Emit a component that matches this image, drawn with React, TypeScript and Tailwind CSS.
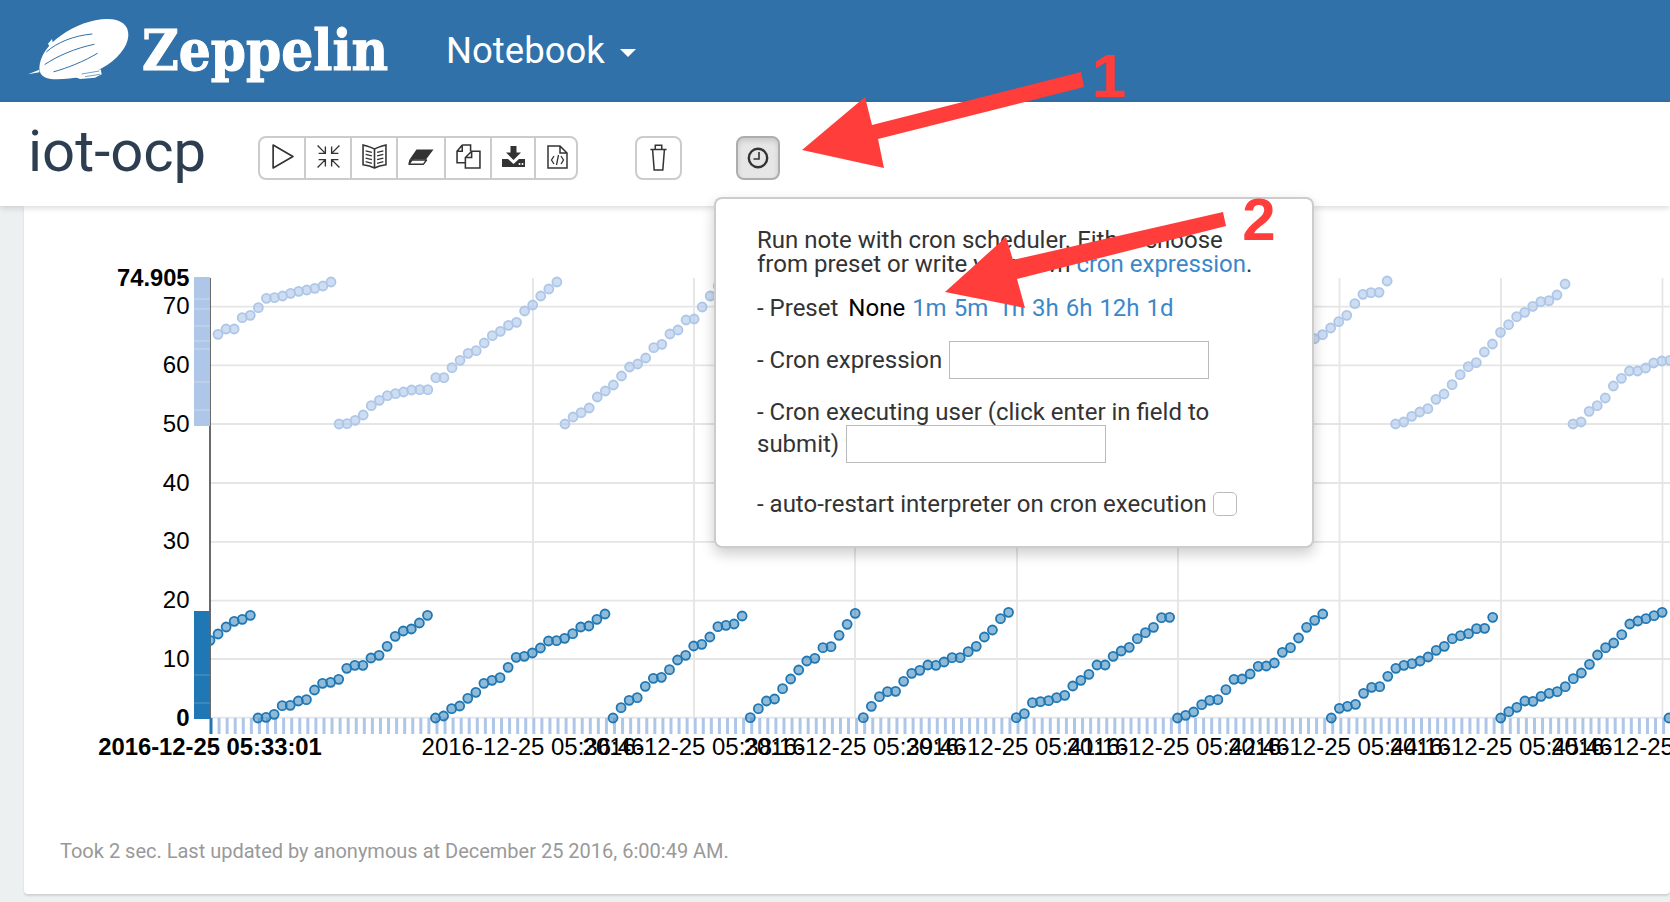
const darkCycles = [
  { x: 210, y: [181, 162, 141, 124, 118, 106] },
  { x: 258, y: [414, 412, 403, 377, 376, 363, 359, 330, 310, 307, 298, 265, 256, 256, 234, 226, 199, 169, 153, 147, 129, 106] },
  { x: 435.5, y: [414, 408, 386, 378, 355, 337, 310, 301, 293, 262, 232, 229, 219, 204, 183, 182, 175, 161, 141, 138, 118, 102] },
  { x: 613, y: [414, 383, 361, 353, 319, 295, 292, 269, 240, 226, 198, 193, 171, 140, 136, 132, 108] },
  { x: 750.3, y: [413, 386, 363, 357, 326, 297, 270, 243, 235, 203, 200, 166, 133, 100] },
  { x: 863.3, y: [413, 379, 350, 335, 334, 304, 280, 271, 255, 256, 246, 233, 233, 215, 199, 171, 150, 116, 97] },
  { x: 1016.3, y: [413, 401, 368, 365, 362, 353, 346, 318, 301, 283, 255, 255, 229, 213, 202, 176, 158, 142, 113, 112] },
  { x: 1177.5, y: [414, 406, 396, 374, 361, 359, 329, 298, 297, 282, 259, 258, 249, 217, 203, 174, 142, 121, 102] },
  { x: 1331.3, y: [414, 385, 379, 373, 340, 322, 320, 289, 265, 256, 251, 243, 231, 211, 199, 176, 167, 161, 146, 145, 112] },
  { x: 1500.7, y: [414, 395, 382, 363, 364, 349, 340, 335, 320, 296, 279, 253, 225, 203, 189, 164, 132, 123, 116, 107, 97] },
  { x: 1669, y: [414] },
]

const lightCycles = [
  { x: 218, y: [253, 237, 237, 203, 196, 173, 145, 143, 138, 130, 124, 120, 115, 108, 96] },
  { x: 339, y: [522, 521, 511, 495, 467, 451, 437, 431, 426, 420, 419, 419, 383, 383, 353, 331, 310, 302, 279, 257, 244, 226, 217, 183, 165, 138, 117, 96] },
  { x: 565, y: [522, 501, 488, 474, 441, 423, 405, 378, 351, 342, 324, 293, 283, 252, 240, 210, 207, 171, 138, 108] },
  { x: 1314.5, y: [266, 254, 234, 215, 196, 161, 133, 128, 127, 93] },
  { x: 1395.6, y: [522, 516, 499, 486, 476, 448, 432, 404, 374, 350, 338, 306, 282, 247, 224, 200, 187, 169, 155, 152, 135, 102] },
  { x: 1573, y: [522, 516, 484, 467, 444, 408, 385, 363, 363, 354, 339, 333, 331] },
]

const gridY = [306.7, 365.4, 424, 483, 541.8, 600.7, 659, 717.7]
const gridX = [533, 694, 855, 1017, 1178, 1339.5, 1501, 1662.5]
const yLabels = [70, 60, 50, 40, 30, 20, 10]
const xLabels = ['05:36:46', '05:38:16', '05:39:46', '05:41:16', '05:42:46', '05:44:16', '05:45:46', '05:47:16']
const ticks = Array.from({ length: 182 }, (_, i) => 210 + i * 8.07)

function Chart() {
  return (
    <svg viewBox="24 206 1646 620" className="block h-[620px] w-[1646px]" fontFamily="'Liberation Sans', Arial, sans-serif">
      {gridY.map((y) => (
        <line key={y} x1={210} x2={1670} y1={y} y2={y} stroke="#e5e5e5" strokeWidth={1.8} />
      ))}
      {gridX.map((x) => (
        <line key={x} x1={x} x2={x} y1={278} y2={718} stroke="#e5e5e5" strokeWidth={1.8} />
      ))}
      <line x1={210} x2={210} y1={278} y2={718} stroke="#444" strokeWidth={1.6} />

      <rect x={194} y={277} width={16} height={149} fill="#aec7e8" />
      {[299, 309, 326, 341, 349, 382, 410].map((y) => (
        <line key={y} x1={194} x2={210} y1={y} y2={y} stroke="#fff" strokeOpacity={0.35} />
      ))}
      <rect x={194} y={611} width={16} height={108} fill="#1f77b4" />
      {[675, 703].map((y) => (
        <line key={y} x1={194} x2={210} y1={y} y2={y} stroke="#fff" strokeOpacity={0.25} />
      ))}

      {ticks.map((x, i) => (
        <rect key={x} x={x - 0.5} y={718} width={3} height={16} fill={i === 0 ? '#1f77b4' : '#aec7e8'} />
      ))}

      {lightCycles.map((c) =>
        c.y.map((y, i) => (
          <circle key={`${c.x}-${i}`} cx={c.x + i * 8.07} cy={250 + y / 3} r={4.5} fill="#aec7e8" fillOpacity={0.6} stroke="#aec7e8" strokeWidth={1.8} />
        )),
      )}
      {darkCycles.map((c) =>
        c.y.map((y, i) => (
          <circle key={`${c.x}-${i}`} cx={c.x + i * 8.07} cy={580 + y / 3} r={4.5} fill="#1f77b4" fillOpacity={0.5} stroke="#1f77b4" strokeWidth={1.8} />
        )),
      )}

      {yLabels.map((v, i) => (
        <text key={v} x={189.5} y={gridY[i] + 7.5} textAnchor="end" fontSize={24} fill="#000">
          {v}
        </text>
      ))}
      <text x={189.5} y={286} textAnchor="end" fontSize={23.7} fontWeight="bold" fill="#000">
        74.905
      </text>
      <text x={189.5} y={725.7} textAnchor="end" fontSize={24} fontWeight="bold" fill="#000">
        0
      </text>

      {xLabels.map((t, i) => (
        <text key={t} x={gridX[i]} y={755} textAnchor="middle" fontSize={24} fill="#000">
          2016-12-25 {t}
        </text>
      ))}
      <text x={210} y={755} textAnchor="middle" fontSize={23.8} fontWeight="bold" fill="#000">
        2016-12-25 05:33:01
      </text>
    </svg>
  )
}

function Logo() {
  return (
    <svg viewBox="0 0 390 225" className="-mt-[6px] h-[75px] w-[130px] shrink-0">
      <path
        d="M58 170 C60 135 82 102 122 74 C165 44 215 24 262 24 C302 24 327 42 325 74 C323 108 292 146 245 172 C205 194 165 205 110 205 C78 205 58 196 58 170 Z"
        fill="#fff"
      />
      <path d="M24 190 L58 176 L58 184 Z M84 98 L96 84 L99 98 L88 106 Z" fill="#fff" />
      <path d="M165 198 L200 182 L242 175 L245 190 L225 200 L180 204 Z" fill="#fff" />
      <path d="M185 189 L238 180 M195 197 L240 190" stroke="#3071a9" strokeWidth={2} fill="none" />
      <g stroke="#3071a9" strokeWidth={3} fill="none" strokeLinecap="round">
        <path d="M80 122 C110 95 160 74 216 69" />
        <path d="M75 160 C112 135 165 112 222 100" />
        <path d="M102 182 C140 172 195 150 232 127" />
      </g>
    </svg>
  )
}

function ToolIcon({ children, w = 25, h = 25 }: { children: React.ReactNode; w?: number; h?: number }) {
  return (
    <svg viewBox="0 0 24 24" width={w} height={h} fill="none" stroke="#333" strokeWidth={1.5}>
      {children}
    </svg>
  )
}

const toolbar = [
  {
    width: 'w-[46px]',
    icon: (
      <ToolIcon>
        <path d="M3 1 L22 12 L3 23 Z" strokeWidth={1.6} strokeLinejoin="round" />
      </ToolIcon>
    ),
  },
  {
    width: 'w-[46px]',
    icon: (
      <ToolIcon>
        <path
          d="M1.5 1.5 L9 9 M2.5 9 H9 V2.5 M22.5 1.5 L15 9 M21.5 9 H15 V2.5 M1.5 22.5 L9 15 M2.5 15 H9 V21.5 M22.5 22.5 L15 15 M21.5 15 H15 V21.5"
          strokeWidth={1.3}
        />
      </ToolIcon>
    ),
  },
  {
    width: 'w-[46px]',
    icon: (
      <ToolIcon>
        <path d="M12 5 C9 3 5 2 1 1 V20 C5 20.5 9 21.5 12 23 C15 21.5 19 20.5 23 20 V1 C19 2 15 3 12 5 Z M12 5 V23" />
        <path d="M3.5 6.5 L9.5 8 M3.5 10 L9.5 11.5 M3.5 13.5 L9.5 15 M3.5 17 L9.5 18.5 M20.5 6.5 L14.5 8 M20.5 10 L14.5 11.5 M20.5 13.5 L14.5 15 M20.5 17 L14.5 18.5" strokeWidth={1.2} />
      </ToolIcon>
    ),
  },
  {
    width: 'w-[48px]',
    icon: (
      <svg viewBox="0 0 26 16" width={26} height={16}>
        <path d="M8.5 0.5 H25.5 L18 10.5 H1.5 Z" fill="#333" />
        <path d="M1 15.2 H15.5 L18.5 11 H2 L1 15.2 Z M1 15.2 L8.5 5" fill="none" stroke="#333" strokeWidth={1.4} strokeLinejoin="round" />
      </svg>
    ),
  },
  {
    width: 'w-[46px]',
    icon: (
      <ToolIcon>
        <path d="M6 1 H14 V7 M6 1 L1 7 V18 H9 M6 1 V7 H1" />
        <path d="M15 7 H23 V23 H9 V13 Z M15 7 V13 H9" />
      </ToolIcon>
    ),
  },
  {
    width: 'w-[44px]',
    icon: (
      <svg viewBox="0 0 23 21" width={23} height={21}>
        <path d="M8.5 0 H14.5 V6.5 H19 L11.5 14 L4 6.5 H8.5 Z" fill="#333" />
        <path d="M0 13 H6 L11.5 18 L17 13 H23 V21 H0 Z" fill="#333" />
        <circle cx={17.5} cy={18} r={1} fill="#fff" />
        <circle cx={20.5} cy={18} r={1} fill="#fff" />
      </svg>
    ),
  },
  {
    width: 'w-[43px]',
    icon: (
      <svg viewBox="0 0 21 24" width={21} height={24} fill="none" stroke="#333" strokeWidth={1.5}>
        <path d="M1 1 H13 L20 8 V23 H1 Z M13 1 V8 H20" />
        <path d="M7 11 L4.5 15 L7 19 M14 11 L16.5 15 L14 19 M11.5 10 L9.5 20" strokeWidth={1.3} />
      </svg>
    ),
  },
]

function Arrows() {
  return (
    <svg viewBox="0 0 1670 902" className="pointer-events-none absolute left-0 top-0 z-20 h-[902px] w-[1670px]">
      <polygon points="802,150 865,97 872,125 1081,72 1084,87 878,139 884,168" fill="#ff3d3b" />
      <polygon points="945,292 1006,237 1013,260 1223,212 1226,226 1017,279 1025,308" fill="#ff3d3b" />
      <text x={1109} y={96.5} textAnchor="middle" fontSize={62} fontWeight="bold" fill="#ff3d3b" fontFamily="'Liberation Sans', sans-serif">
        1
      </text>
      <text x={1259} y={240} textAnchor="middle" fontSize={60} fontWeight="bold" fill="#ff3d3b" fontFamily="'Liberation Sans', sans-serif">
        2
      </text>
    </svg>
  )
}

function CronPopover() {
  return (
    <div className="absolute left-[714px] top-[197px] z-20 h-[351px] w-[600px] rounded-lg border-2 border-black/20 bg-white pl-[41px] pr-[46px] pt-[29px] text-[24px] text-[#333] shadow-[0_6px_14px_rgba(0,0,0,0.2)]">
      <p className="leading-[24px]">
        Run note with cron scheduler. Either choose from preset or write your own <a className="text-[#3c87c9]">cron expression</a>.
      </p>
      <div className="mt-[20px] flex h-[24px] items-center leading-[24px]">
        <span>- Preset</span>
        <span className="ml-[10px] text-black">None</span>
        <div className="ml-[7px] flex gap-[7px] text-[#3c87c9]">
          <a>1m</a>
          <a>5m</a>
          <a className="ml-[3px]">1h</a>
          <a>3h</a>
          <a>6h</a>
          <a>12h</a>
          <a>1d</a>
        </div>
      </div>
      <div className="mt-[21px] flex items-center gap-[7px]">
        <span>- Cron expression</span>
        <div className="h-[38px] w-[260px] border border-[#bbb]" />
      </div>
      <p className="mt-[17px] leading-[32px]">
        - Cron executing user (click enter in field to
      </p>
      <div className="-mt-[3px] flex items-center gap-[7px]">
        <span>submit)</span>
        <div className="h-[38px] w-[260px] border border-[#bbb]" />
      </div>
      <div className="mt-[23px] flex items-center gap-[6px]">
        <span>- auto-restart interpreter on cron execution</span>
        <div className="h-[24px] w-[24px] rounded-[5px] border border-[#bbb]" />
      </div>
    </div>
  )
}

export default function App() {
  return (
    <div className="relative h-[902px] w-[1670px] overflow-hidden bg-[#ecf0f1] font-[Roboto,sans-serif]">
      <header className="flex h-[102px] items-center bg-[#3071a9] pl-[20px] text-white">
        <Logo />
        <span className="-ml-[8px] -mt-[2px] w-[304px] font-['DejaVu_Serif_Condensed','DejaVu_Serif',serif] text-[56px] font-bold [-webkit-text-stroke:1px_white]">Zeppelin</span>
        <span className="text-[36.5px]">Notebook</span>
        <span className="ml-[15px] mt-[3px] h-0 w-0 border-x-[8px] border-t-[8px] border-x-transparent border-t-white" />
      </header>

      <div className="relative z-10 flex h-[104px] items-center bg-white shadow-[0_2px_6px_rgba(0,0,0,0.15)]">
        <h1 className="-mt-[6px] ml-[28px] w-[230px] text-[58px] leading-none text-[#2c3e50]">iot-ocp</h1>
        <div className="mt-[8px] flex items-center">
          <div className="flex h-[44px] w-[320px] overflow-hidden rounded-lg border-2 border-[#ccc]">
            {toolbar.map((t, i) => (
              <button key={i} type="button" className={`flex shrink-0 items-center justify-center border-r-2 border-[#ccc] pb-[3px] last:border-r-0 ${t.width}`}>
                {t.icon}
              </button>
            ))}
          </div>
          <button type="button" className="ml-[57px] flex h-[44px] w-[47px] items-center justify-center rounded-lg border-2 border-[#ccc] pb-[3px]">
            <svg viewBox="0 0 16 26" width={19} height={28} fill="none" stroke="#333" strokeWidth={1.4}>
              <path d="M0.5 6 H15.5 M5 6 V2 H11 V6 M2.5 6 L4 25 H12 L13.5 6" />
            </svg>
          </button>
          <button type="button" className="ml-[54px] flex h-[44px] w-[44px] items-center justify-center rounded-lg border-2 border-[#adadad] bg-[#e6e6e6] shadow-[inset_0_3px_5px_rgba(0,0,0,0.125)]">
            <svg viewBox="0 0 22 22" width={22} height={22} fill="none" stroke="#333" strokeWidth={2.4}>
              <circle cx={11} cy={11} r={9.2} />
              <path d="M12 5 V12 H6.5" strokeWidth={1.6} />
            </svg>
          </button>
        </div>
      </div>

      <main className="ml-[24px] h-[688px] overflow-hidden rounded-b bg-white shadow-[0_2px_2px_rgba(0,0,0,0.12)]">
        <Chart />
        <p className="ml-[36px] mt-[10px] text-[20px] text-[#999]">
          Took 2 sec. Last updated by anonymous at December 25 2016, 6:00:49 AM.
        </p>
      </main>

      <CronPopover />
      <Arrows />
    </div>
  )
}
